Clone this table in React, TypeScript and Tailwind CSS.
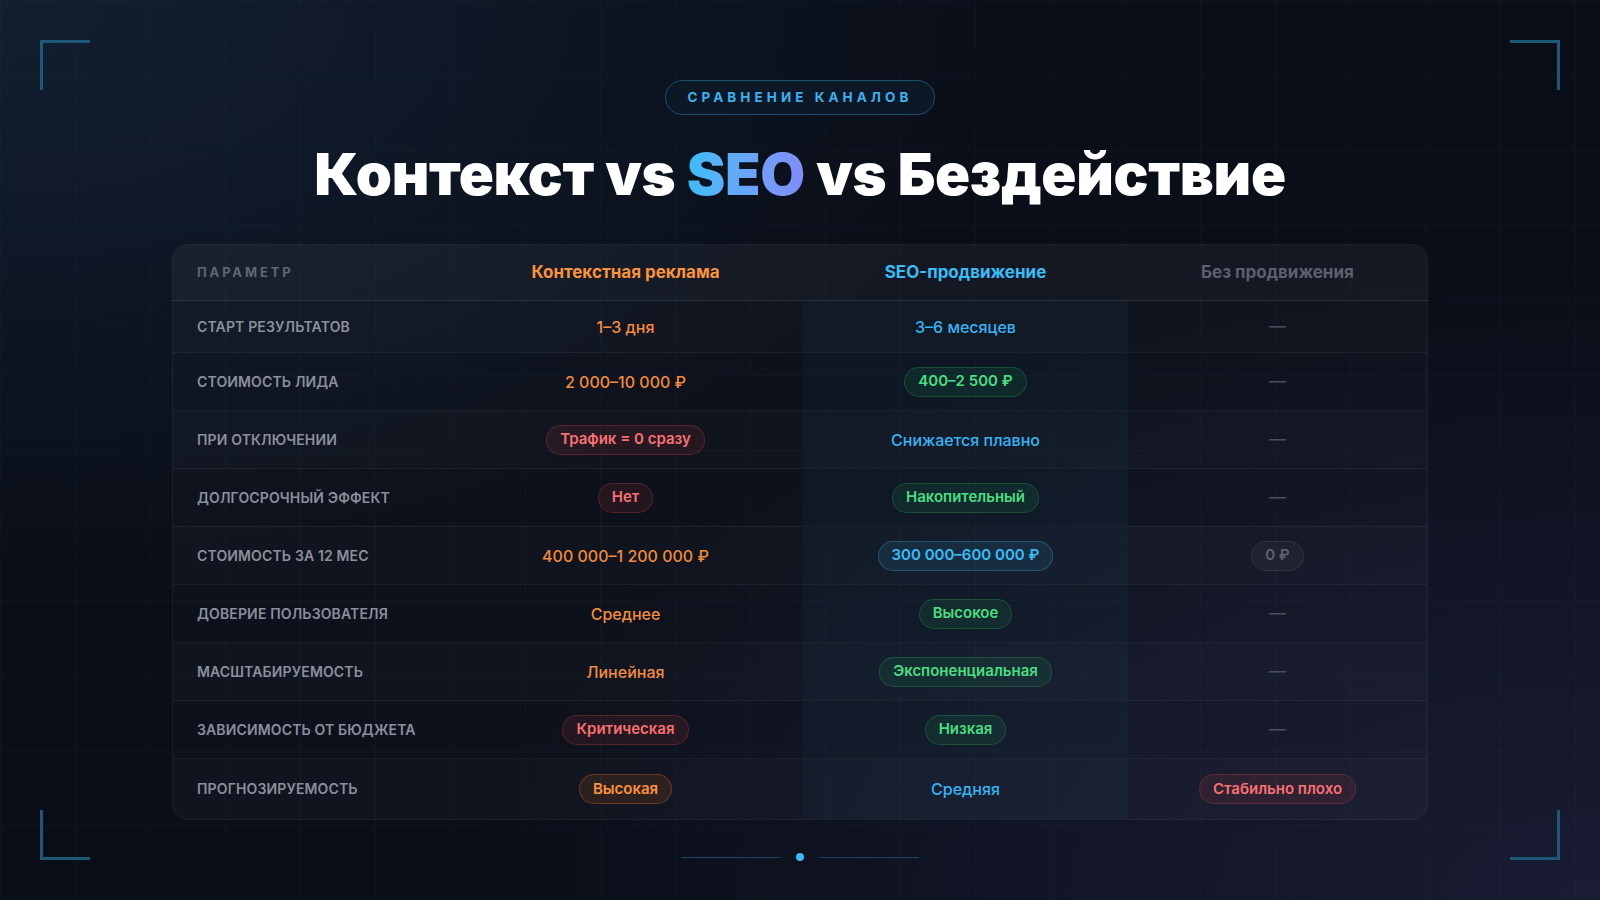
import React from 'react'

type Tone = 'orange' | 'blue' | 'green' | 'red' | 'gray'
type Cell = { kind: 'text' | 'pill' | 'dash'; tone?: Tone; value?: string }

const textTone: Record<Tone, string> = {
  orange: 'text-[#f28b3e]',
  blue: 'text-[#38b4f4]',
  green: 'text-[#4ade80]',
  red: 'text-[#f87171]',
  gray: 'text-[#5b626e]',
}

const pillTone: Record<Tone, string> = {
  orange: 'text-[#fb923c] bg-[#f97316]/[0.12] border-[#f97316]/30',
  blue: 'text-[#38bdf8] bg-[#38bdf8]/[0.1] border-[#38bdf8]/30',
  green: 'text-[#4ade80] bg-[#22c55e]/[0.1] border-[#22c55e]/25',
  red: 'text-[#f87171] bg-[#ef4444]/[0.1] border-[#ef4444]/25',
  gray: 'text-[#5b626e] bg-white/[0.04] border-white/[0.08]',
}

const t = (tone: Tone, value: string): Cell => ({ kind: 'text', tone, value })
const p = (tone: Tone, value: string): Cell => ({ kind: 'pill', tone, value })
const dash: Cell = { kind: 'dash' }

const rows: { label: string; ctx: Cell; seo: Cell; none: Cell }[] = [
  { label: 'СТАРТ РЕЗУЛЬТАТОВ', ctx: t('orange', '1–3 дня'), seo: t('blue', '3–6 месяцев'), none: dash },
  { label: 'СТОИМОСТЬ ЛИДА', ctx: t('orange', '2 000–10 000 ₽'), seo: p('green', '400–2 500 ₽'), none: dash },
  { label: 'ПРИ ОТКЛЮЧЕНИИ', ctx: p('red', 'Трафик = 0 сразу'), seo: t('blue', 'Снижается плавно'), none: dash },
  { label: 'ДОЛГОСРОЧНЫЙ ЭФФЕКТ', ctx: p('red', 'Нет'), seo: p('green', 'Накопительный'), none: dash },
  { label: 'СТОИМОСТЬ ЗА 12 МЕС', ctx: t('orange', '400 000–1 200 000 ₽'), seo: p('blue', '300 000–600 000 ₽'), none: p('gray', '0 ₽') },
  { label: 'ДОВЕРИЕ ПОЛЬЗОВАТЕЛЯ', ctx: t('orange', 'Среднее'), seo: p('green', 'Высокое'), none: dash },
  { label: 'МАСШТАБИРУЕМОСТЬ', ctx: t('orange', 'Линейная'), seo: p('green', 'Экспоненциальная'), none: dash },
  { label: 'ЗАВИСИМОСТЬ ОТ БЮДЖЕТА', ctx: p('red', 'Критическая'), seo: p('green', 'Низкая'), none: dash },
  { label: 'ПРОГНОЗИРУЕМОСТЬ', ctx: p('orange', 'Высокая'), seo: t('blue', 'Средняя'), none: p('red', 'Стабильно плохо') },
]

function Value({ cell }: { cell: Cell }) {
  if (cell.kind === 'dash') return <span className="text-[17px] text-[#4a505b]">—</span>
  if (cell.kind === 'pill')
    return (
      <span className={`h-[30px] px-[13px] inline-flex items-center rounded-full border text-[15px] font-semibold whitespace-nowrap ${pillTone[cell.tone!]}`}>
        {cell.value}
      </span>
    )
  return <span className={`text-base font-medium leading-6 whitespace-nowrap ${textTone[cell.tone!]}`}>{cell.value}</span>
}

function Corner({ pos }: { pos: string }) {
  return <div className={`absolute w-[50px] h-[50px] border-[#1d5878] ${pos}`} />
}

export default function App() {
  return (
    <div
      className="relative w-full h-screen overflow-hidden bg-[#0a0e18] bg-[radial-gradient(ellipse_at_top_left,rgba(28,52,78,0.45),transparent_45%),radial-gradient(ellipse_at_bottom_right,rgba(40,42,78,0.5),transparent_50%)]"
      style={{ fontFamily: 'Inter, "Noto Sans", sans-serif' }}
    >
      {/* grid */}
      <div className="absolute inset-0 bg-[linear-gradient(rgba(56,189,248,0.035)_1px,transparent_1px),linear-gradient(90deg,rgba(56,189,248,0.035)_1px,transparent_1px)] bg-[size:75px_75px] pointer-events-none" />

      {/* frame corners */}
      <Corner pos="left-10 top-10 border-l-[3px] border-t-[3px]" />
      <Corner pos="right-10 top-10 border-r-[3px] border-t-[3px]" />
      <Corner pos="left-10 bottom-10 border-l-[3px] border-b-[3px]" />
      <Corner pos="right-10 bottom-10 border-r-[3px] border-b-[3px]" />

      <div className="relative flex flex-col items-center pt-20">
        <div className="px-[22px] py-2 rounded-full border border-[#1b5070] bg-[#0c1826] text-[13.5px] leading-[17px] font-bold tracking-[0.3em] text-[#3db0f0]">
          СРАВНЕНИЕ КАНАЛОВ
        </div>

        <h1 className="mt-[30px] text-[58px] leading-[58px] font-black tracking-[-0.005em] text-white">
          Контекст vs{' '}
          <span className="bg-gradient-to-r from-[#38bdf8] to-[#818cf8] bg-clip-text text-transparent">SEO</span> vs Бездействие
        </h1>

        {/* table */}
        <div className="mt-[41px] w-[1256px] rounded-2xl border border-white/[0.06] bg-white/[0.015] overflow-hidden">
          <div className="grid grid-cols-[275px_355px_325px_1fr] h-[56px] items-center bg-white/[0.03] border-b border-white/[0.08]">
            <div className="pl-6 text-[13px] font-bold tracking-[0.22em] text-[#5f6773]">ПАРАМЕТР</div>
            <div className="text-center text-[17px] font-bold text-[#fb923c]">Контекстная реклама</div>
            <div className="text-center text-[17px] font-bold text-[#38bdf8]">SEO-продвижение</div>
            <div className="text-center text-[17px] font-bold text-[#5a616d]">Без продвижения</div>
          </div>

          {rows.map((r, i) => (
            <div
              key={r.label}
              className={`grid grid-cols-[275px_355px_325px_1fr] ${
                i === 0 ? 'h-[52px]' : i === rows.length - 1 ? 'h-[60px]' : 'h-[58px]'
              } ${i < rows.length - 1 ? 'border-b border-white/[0.05]' : ''} ${i % 2 === 0 ? 'bg-white/[0.015]' : ''}`}
            >
              <div className="pl-6 flex items-center text-sm font-semibold tracking-[0.01em] text-[#8a909b]">{r.label}</div>
              <div className="flex items-center justify-center">
                <Value cell={r.ctx} />
              </div>
              <div className="flex items-center justify-center bg-[#38bdf8]/[0.035]">
                <Value cell={r.seo} />
              </div>
              <div className="flex items-center justify-center">
                <Value cell={r.none} />
              </div>
            </div>
          ))}
        </div>

        {/* pager */}
        <div className="mt-[33px] flex items-center gap-[15px]">
          <div className="w-[100px] h-px bg-[#1b465f]" />
          <div className="w-2 h-2 rounded-full bg-[#38bdf8]" />
          <div className="w-[100px] h-px bg-[#1b465f]" />
        </div>
      </div>
    </div>
  )
}
